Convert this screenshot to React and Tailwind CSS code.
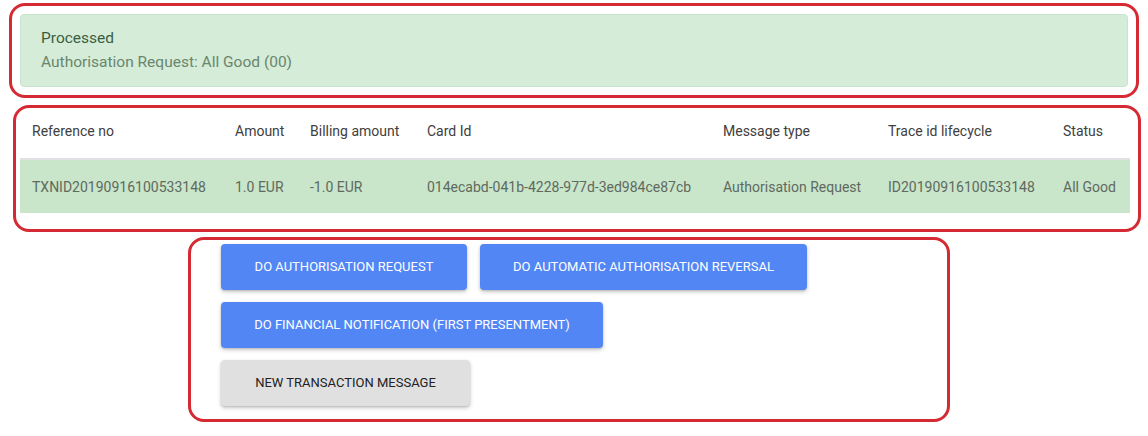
const font = { fontFamily: "Roboto, 'Liberation Sans', sans-serif" };

const columns = [
    { label: 'Reference no', value: 'TXNID20190916100533148' },
    { label: 'Amount', value: '1.0 EUR' },
    { label: 'Billing amount', value: '-1.0 EUR' },
    { label: 'Card Id', value: '014ecabd-041b-4228-977d-3ed984ce87cb' },
    { label: 'Message type', value: 'Authorisation Request' },
    { label: 'Trace id lifecycle', value: 'ID20190916100533148' },
    { label: 'Status', value: 'All Good' },
];

const gridCols = 'grid grid-cols-[203px_75px_117px_296px_165px_175px_1fr]';

const RaisedButton = ({ width, grey, children }) => (
    <button
        className={`${width} h-[46px] rounded-[4px] text-[13px] font-normal uppercase shadow-[0_2px_4px_rgba(0,0,0,0.2),0_1px_2px_rgba(0,0,0,0.12)] ${
            grey ? 'bg-[#e0e0e0] text-[#222]' : 'bg-[#5286f5] text-white'
        }`}
    >
        {children}
    </button>
);

export default function App() {
    return (
        <div className="w-[1148px] h-[436px] bg-white overflow-hidden" style={font}>
            {/* status alert */}
            <div className="ml-[9px] mt-[3px] w-[1130px] h-[95px] border-[3px] border-[#d52a33] rounded-[16px] pl-[8px] pr-[8px] pt-[8px]">
                <div className="h-[73px] bg-[#d5ecd9] border border-[#c9e4cd] rounded-[4px] pl-[20px] pt-[11px]">
                    <div className="text-[15.5px] leading-[24px] text-[#3c5e3f]">Processed</div>
                    <div className="text-[15.5px] leading-[24px] text-[#6a866c]">Authorisation Request: All Good (00)</div>
                </div>
            </div>

            {/* transaction table */}
            <div className="ml-[13px] mt-[7px] w-[1128px] h-[127px] border-[3px] border-[#d52a33] rounded-[16px] pl-[4px]">
                <div className="w-[1110px]">
                    <div className={`${gridCols} border-b-2 border-[#dfe1e4] text-[14px] leading-[22px] text-[#404040]`}>
                        {columns.map((c) => (
                            <div key={c.label} className="pl-[12px] pt-[12px] pb-[16px]">
                                {c.label}
                            </div>
                        ))}
                    </div>
                    <div className={`${gridCols} bg-[#c9e5ca] text-[14px] leading-[22px] text-[#5f6a5f]`}>
                        {columns.map((c) => (
                            <div key={c.label} className="pl-[12px] pt-[16px] pb-[15px] whitespace-nowrap">
                                {c.value}
                            </div>
                        ))}
                    </div>
                </div>
            </div>

            {/* actions */}
            <div className="ml-[188px] mt-[5px] w-[762px] h-[185px] border-[3px] border-[#d52a33] rounded-[16px] pl-[30px] pt-[4px] flex flex-col gap-[12px]">
                <div className="flex gap-[13px]">
                    <RaisedButton width="w-[246px]">Do authorisation request</RaisedButton>
                    <RaisedButton width="w-[327px]">Do automatic authorisation reversal</RaisedButton>
                </div>
                <div className="flex">
                    <RaisedButton width="w-[382px]">Do financial notification (first presentment)</RaisedButton>
                </div>
                <div className="flex">
                    <RaisedButton width="w-[249px]" grey>
                        New transaction message
                    </RaisedButton>
                </div>
            </div>
        </div>
    );
}
